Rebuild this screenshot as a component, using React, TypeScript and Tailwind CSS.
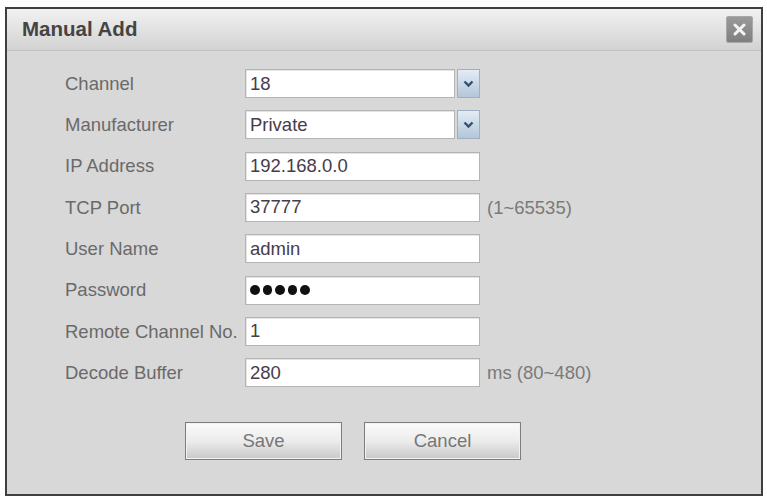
import type { ReactNode } from "react";

const LABEL = "w-[180px] shrink-0 text-[18.5px] text-[#6a6a6a]";
const FIELD =
  "h-[29px] border border-[#b4b4b4] bg-white pl-[4px] text-[18.5px] text-[#463c4a] shadow-[inset_1px_1px_0_#e4e4e4] outline-none";

function Chevron() {
  return (
    <svg width="11" height="8" viewBox="0 0 11 8">
      <path d="M1.5 1.5 L5.5 5.5 L9.5 1.5" fill="none" stroke="#34506e" strokeWidth="2.4" />
    </svg>
  );
}

function Row({ label, children, hint }: { label: string; children: ReactNode; hint?: string }) {
  return (
    <div className="flex h-[29px] items-center">
      <span className={LABEL}>{label}</span>
      {children}
      {hint && <span className="ml-[7px] text-[18.5px] text-[#7a7a7a]">{hint}</span>}
    </div>
  );
}

function Select({ value }: { value: string }) {
  return (
    <div className="flex h-[29px] items-stretch gap-[2px]">
      <div className={`${FIELD} flex w-[210px] items-center`}>{value}</div>
      <div className="flex w-[23px] items-center justify-center border border-[#9fb0c2] bg-gradient-to-b from-[#e3ecf5] to-[#b3c6da]">
        <Chevron />
      </div>
    </div>
  );
}

function Text({ value }: { value: string }) {
  return <input readOnly value={value} className={`${FIELD} w-[235px]`} />;
}

export default function App() {
  return (
    <div className="h-[498px] w-[767px] bg-white pl-[5px] pt-[7px] font-['Liberation_Sans',Arial,sans-serif]">
      <div className="flex h-[489px] w-[758px] flex-col border-2 border-[#3f3f3f] bg-[#d8d8d8]">
        <div className="flex h-[42px] shrink-0 items-center justify-between border-b border-[#c2c2c2] bg-gradient-to-b from-[#f2f2f2] to-[#d2d2d2] pl-[15px] pr-[8px]">
          <span className="text-[20.5px] font-bold text-[#444]">Manual Add</span>
          <button className="flex h-[27px] w-[27px] items-center justify-center rounded-[2px] border border-[#a8a8a8] bg-gradient-to-b from-[#9a9a9a] to-[#7f7f7f]">
            <svg width="13" height="13" viewBox="0 0 13 13">
              <path d="M2 2 L11 11 M11 2 L2 11" stroke="#f4f4f4" strokeWidth="3" strokeLinecap="round" />
            </svg>
          </button>
        </div>

        <div className="flex flex-col gap-[12.33px] pl-[58px] pt-[18px]">
          <Row label="Channel">
            <Select value="18" />
          </Row>
          <Row label="Manufacturer">
            <Select value="Private" />
          </Row>
          <Row label="IP Address">
            <Text value="192.168.0.0" />
          </Row>
          <Row label="TCP Port" hint="(1~65535)">
            <Text value="37777" />
          </Row>
          <Row label="User Name">
            <Text value="admin" />
          </Row>
          <Row label="Password">
            <div className={`${FIELD} flex w-[235px] items-center gap-[3px] pl-[3px]`}>
              {[0, 1, 2, 3, 4].map((i) => (
                <span key={i} className="h-[9.5px] w-[9.5px] rounded-full bg-[#111]" />
              ))}
            </div>
          </Row>
          <Row label="Remote Channel No.">
            <Text value="1" />
          </Row>
          <Row label="Decode Buffer" hint="ms (80~480)">
            <Text value="280" />
          </Row>
        </div>

        <div className="mt-[35px] flex gap-[22px] pl-[178px]">
          {["Save", "Cancel"].map((b) => (
            <button
              key={b}
              className="h-[38px] w-[157px] border border-[#7d7d7d] bg-gradient-to-b from-[#fbfbfb] via-[#ececec] to-[#c9c9c9] text-[18.5px] text-[#777] shadow-[inset_0_0_0_1px_#f2f2f2]"
            >
              {b}
            </button>
          ))}
        </div>
      </div>
    </div>
  );
}
